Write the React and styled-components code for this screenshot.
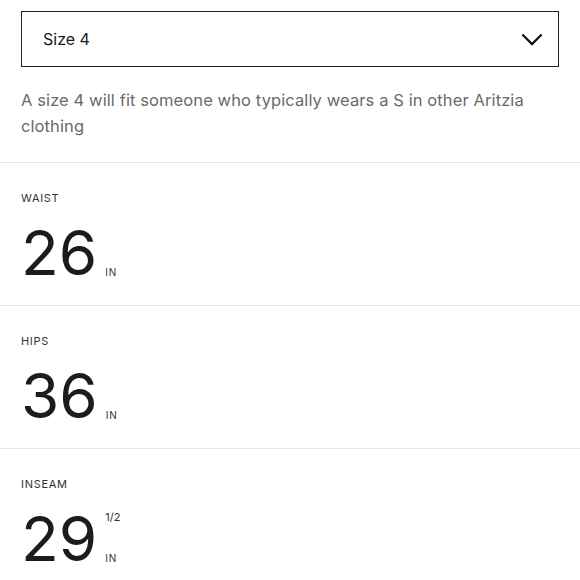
import React from 'react';
import styled, { createGlobalStyle } from 'styled-components';

const GlobalStyle = createGlobalStyle`
  html, body {
    margin: 0;
    padding: 0;
    background: #fff;
  }
  body {
    font-family: "Inter", "Liberation Sans", sans-serif;
    color: #1f1f1f;
  }
`;

const measurements = [
  { label: 'WAIST', value: '26' },
  { label: 'HIPS', value: '36' },
  { label: 'INSEAM', value: '29', fraction: '1/2' },
];

const App = () => (
  <Page>
    <GlobalStyle />
    <Top>
      <Select>
        <span>Size 4</span>
        <Chevron viewBox="0 0 24 14" aria-hidden="true">
          <path d="M1.5 1.5 L12 12 L22.5 1.5" />
        </Chevron>
      </Select>
      <Note>
        A size 4 will fit someone who typically wears a S in other Aritzia
        clothing
      </Note>
    </Top>
    {measurements.map((m) => (
      <Row key={m.label}>
        <Label>{m.label}</Label>
        <ValueLine>
          <Number>{m.value}</Number>
          <Unit>
            <Fraction>{m.fraction || ''}</Fraction>
            <span>IN</span>
          </Unit>
        </ValueLine>
      </Row>
    ))}
  </Page>
);

const Page = styled.div`
  width: 580px;
  height: 580px;
  overflow: hidden;
`;

const Top = styled.div`
  padding: 11px 21px 0 21px;
  height: 162px;
  box-sizing: border-box;
`;

const Select = styled.div`
  height: 56px;
  box-sizing: border-box;
  border: 1.5px solid #222;
  display: flex;
  align-items: center;
  justify-content: space-between;
  padding: 0 15px 0 21px;
  font-size: 16px;
  color: #1a1a1a;
`;

const Chevron = styled.svg`
  width: 22px;
  height: 13px;
  fill: none;
  stroke: #111;
  stroke-width: 2.4;
`;

const Note = styled.p`
  margin: 20px 0 0;
  font-size: 16.5px;
  line-height: 26px;
  letter-spacing: 0.1px;
  color: #6a6a6a;
`;

const Row = styled.div`
  border-top: 1.5px solid #e6e6e6;
  height: 143px;
  box-sizing: border-box;
  padding: 29px 21px 0;
`;

const Label = styled.div`
  font-size: 11px;
  letter-spacing: 0.7px;
  color: #333;
  line-height: 12px;
`;

const ValueLine = styled.div`
  display: flex;
  align-items: stretch;
  margin-top: 18px;
`;

const Number = styled.span`
  font-size: 62px;
  line-height: 62px;
  color: #1c1c1c;
`;

const Unit = styled.span`
  display: flex;
  flex-direction: column;
  justify-content: space-between;
  margin-left: 8px;
  padding: 3px 0 6px;
  font-size: 10px;
  line-height: 12px;
  letter-spacing: 0.8px;
  color: #333;
`;

const Fraction = styled.span`
  font-size: 11px;
  letter-spacing: 0;
`;

export default App;
